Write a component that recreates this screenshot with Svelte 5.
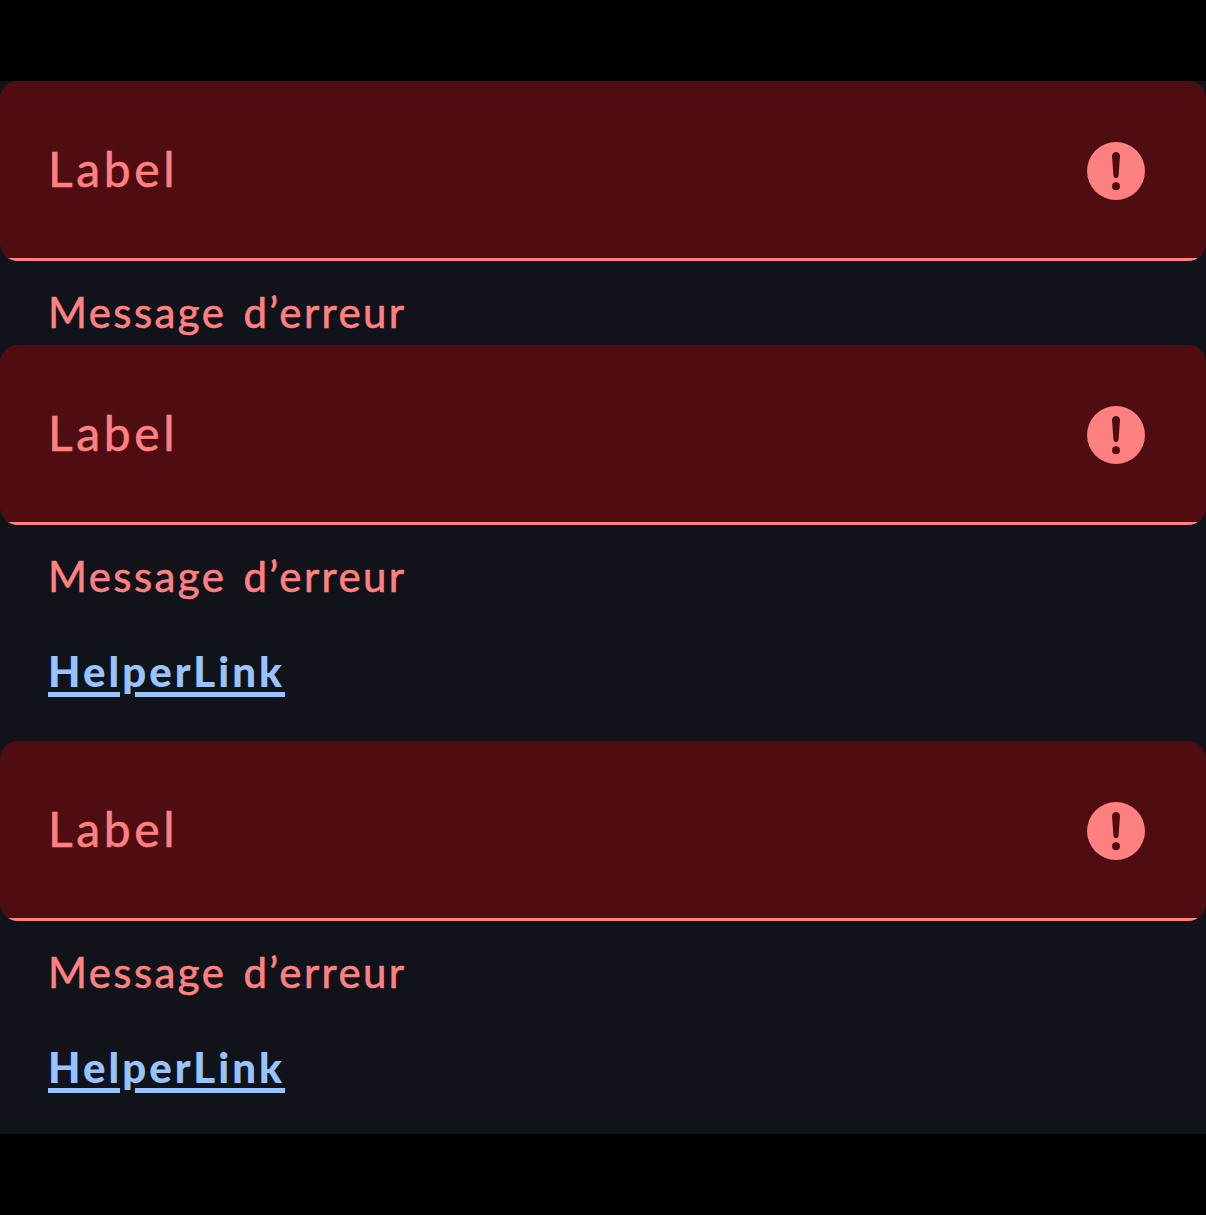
<script>
  const fields = [
    { label: 'Label', error: 'Message d’erreur', link: '' },
    { label: 'Label', error: 'Message d’erreur', link: 'HelperLink' },
    { label: 'Label', error: 'Message d’erreur', link: 'HelperLink' }
  ];
</script>

<main>
  <section class="panel">
    {#each fields as field}
      <div class="item">
        <div class="input">
          <span class="label">{field.label}</span>
          <svg class="alert" viewBox="0 0 58 58" aria-hidden="true">
            <circle class="disc" cx="29" cy="29" r="29" />
            <path class="mark" d="M25 14C25 8.7 33 8.7 33 14L31.6 33.3C31.4 37.3 26.6 37.3 26.4 33.3Z" />
            <circle class="mark" cx="29" cy="44.3" r="4" />
          </svg>
        </div>
        <p class="error">{field.error}</p>
        {#if field.link}
          <div class="link-row"><a class="link" href="#help">{field.link}</a></div>
        {/if}
      </div>
    {/each}
  </section>
</main>

<style>
  :global(body) {
    margin: 0;
    background: #000;
  }
  main {
    box-sizing: border-box;
    height: 1215px;
    padding-top: 81px;
    background: #000;
    font-family: Lato, 'Open Sans', sans-serif;
    overflow: hidden;
  }
  .panel {
    height: 1053px;
    background: #10131a;
    overflow: hidden;
  }
  .input {
    box-sizing: border-box;
    height: 180px;
    padding: 0 61px 0 48px;
    display: flex;
    align-items: center;
    justify-content: space-between;
    border-radius: 18px;
    background: linear-gradient(to top, #ff8080 3px, #500d11 3px);
    color: #ff8080;
  }
  .label {
    padding-bottom: 4px;
    font-size: 48px;
    line-height: 72px;
    letter-spacing: 3.6px;
    -webkit-text-stroke: 0.6px currentColor;
  }
  .alert {
    width: 58px;
    height: 58px;
  }
  .disc {
    fill: #ff8080;
  }
  .mark {
    fill: #500d11;
  }
  .error {
    box-sizing: border-box;
    height: 84px;
    margin: 0;
    padding: 21px 48px 0;
    color: #ff8080;
    font-size: 42px;
    line-height: 60px;
    letter-spacing: 2.4px;
    word-spacing: 4px;
    white-space: nowrap;
    -webkit-text-stroke: 0.6px currentColor;
  }
  .link-row {
    box-sizing: border-box;
    height: 132px;
    padding: 32px 48px 0;
    line-height: 60px;
  }
  .link {
    color: #99c3ff;
    font-size: 42px;
    font-weight: 900;
    letter-spacing: 3.05px;
    text-decoration: underline;
    text-decoration-thickness: 5px;
    text-underline-offset: 5px;
  }
</style>
